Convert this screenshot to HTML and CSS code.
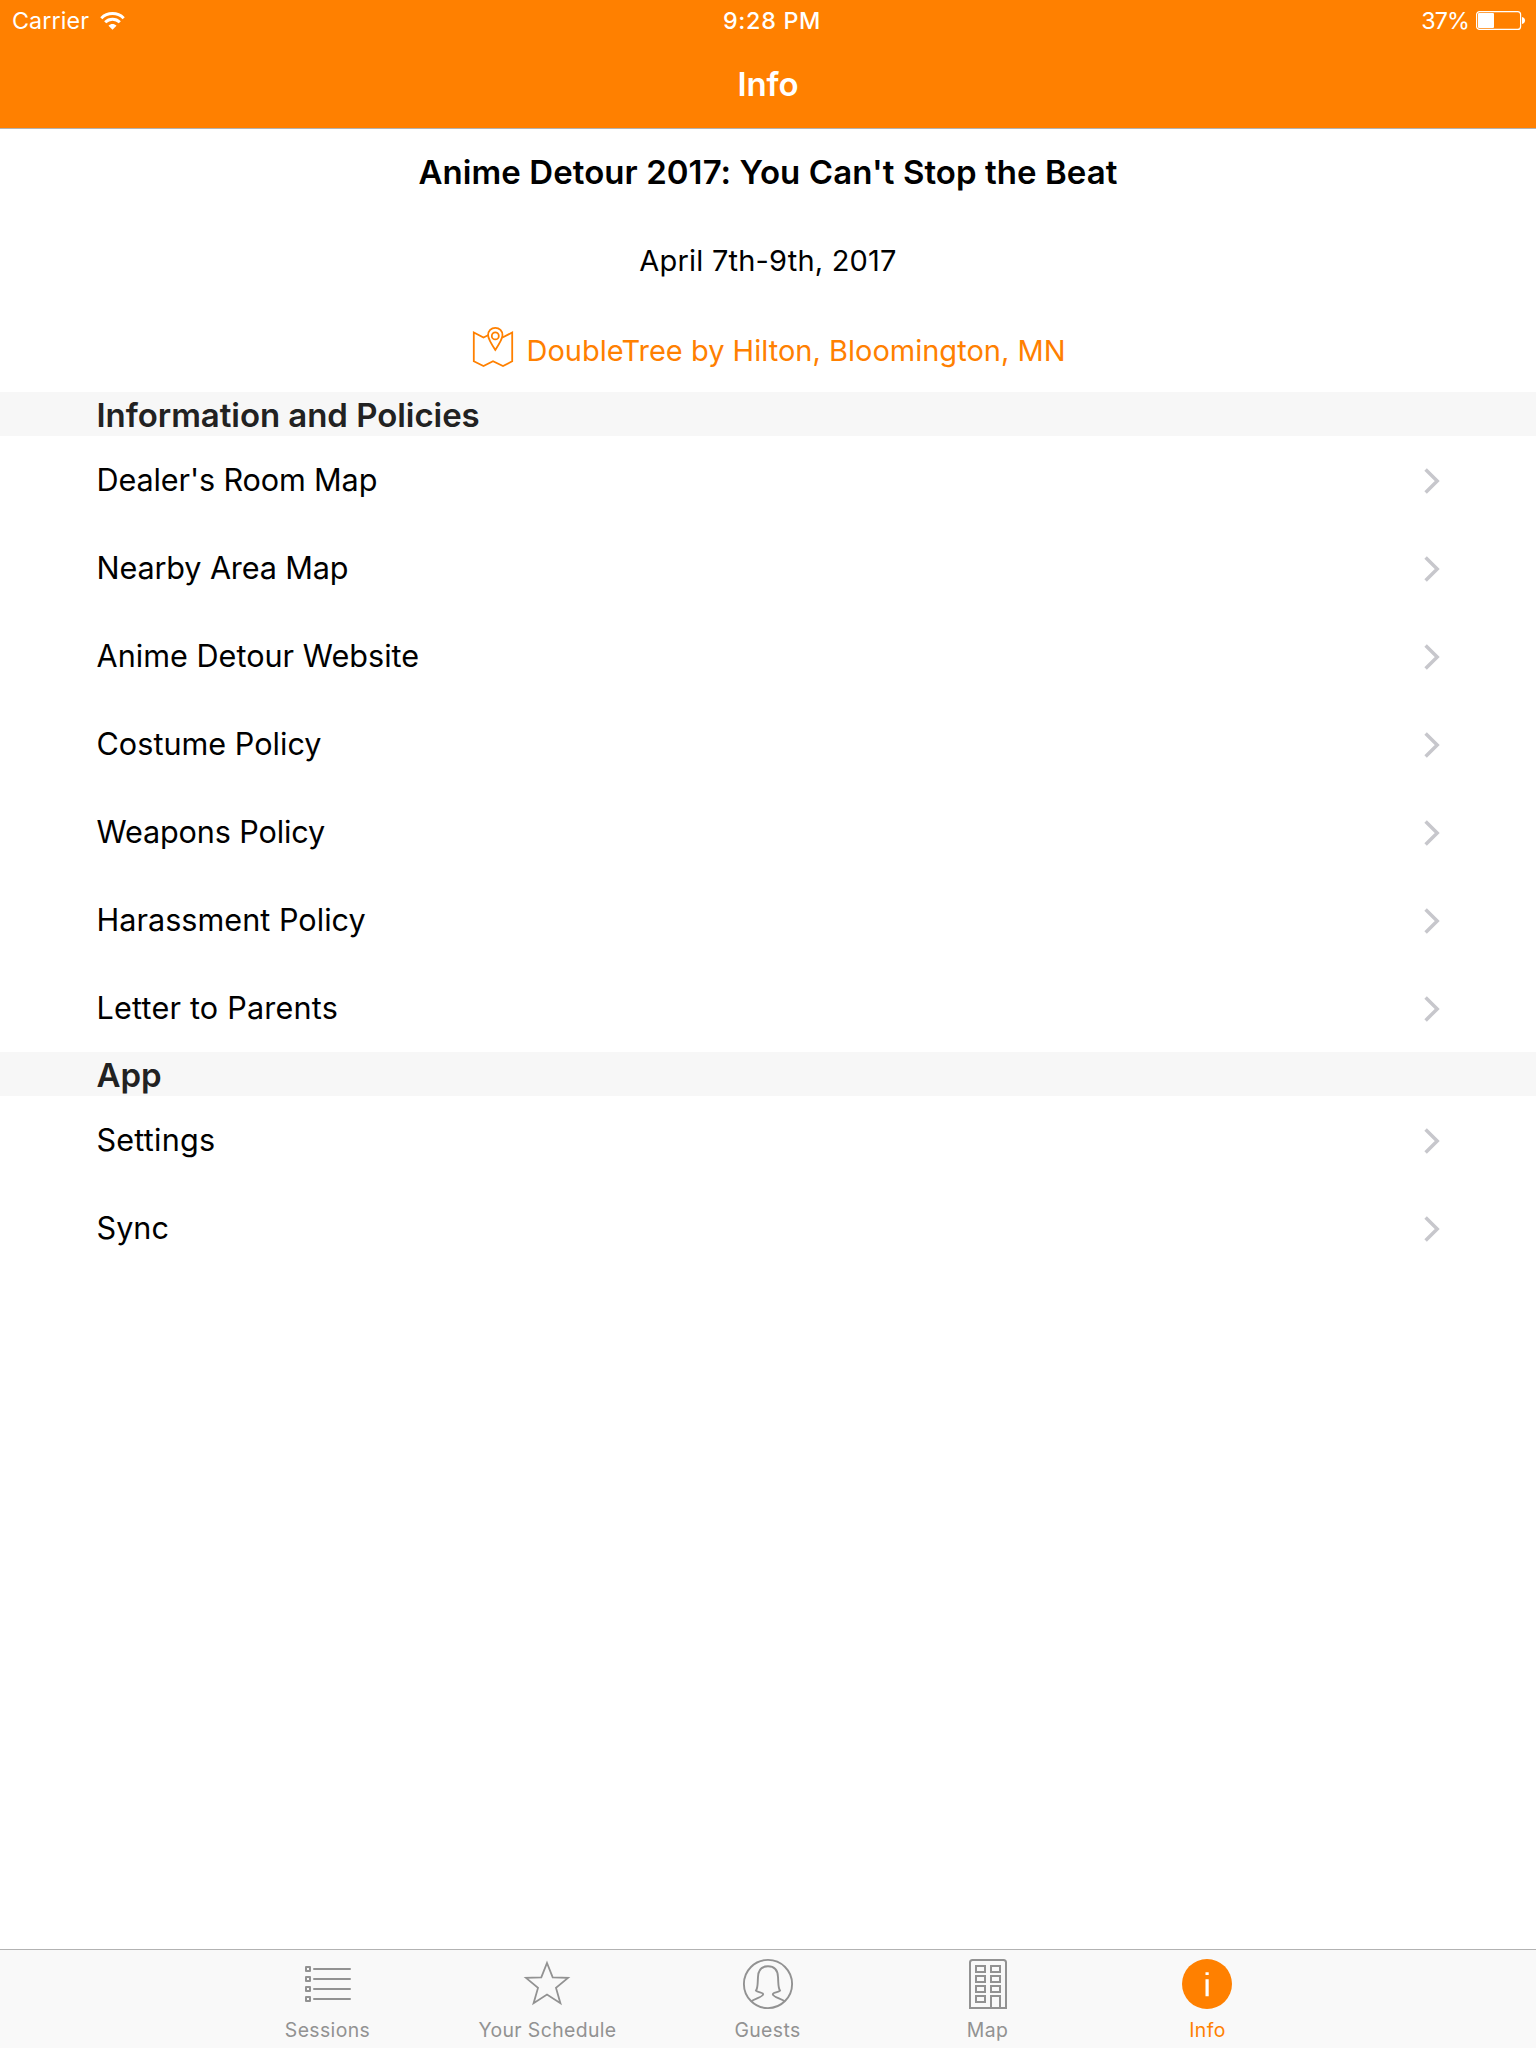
FILE: index.html
```html
<!DOCTYPE html>
<html lang="en">
<head>
<meta charset="utf-8">
<title>Info</title>
<link rel="stylesheet" href="styles.css">
</head>
<body>
<svg class="defs" aria-hidden="true">
  <symbol id="chevron" viewBox="0 0 16 26"><path d="M1.600 1.600 13.200 13 1.600 24.400" fill="none" stroke="#c7c7cc" stroke-width="3.500"/></symbol>
</svg>

<header class="navbar">
  <div class="status">
    <div class="status-left">
      <span class="carrier">Carrier</span>
      <svg class="wifi" width="25" height="18" viewBox="0 0 25 18">
        <g fill="none" stroke="#fff" stroke-width="3">
          <path d="M1.300 6.200C7.500 0 17.500 0 23.700 6.200"/>
          <path d="M5.200 10.300C9.300 6.300 15.700 6.300 19.800 10.300"/>
        </g>
        <path d="M8.500 13.700C10.700 11.400 14.300 11.400 16.500 13.700L12.500 17.800Z" fill="#fff"/>
      </svg>
    </div>
    <div class="time">9:28 PM</div>
    <div class="status-right">
      <span class="percent">37%</span>
      <svg class="battery" width="49" height="19" viewBox="0 0 49 19">
        <rect x=".6" y=".6" width="44" height="17.800" rx="3" fill="none" stroke="#fff" stroke-width="1.200"/>
        <rect x="2" y="2" width="16" height="15" rx="1" fill="#fff"/>
        <path d="M46 6c4 .5 4 6.500 0 7z" fill="#fff"/>
      </svg>
    </div>
  </div>
  <h1 class="nav-title">Info</h1>
</header>

<main class="content">
  <section class="event">
    <h2 class="event-title">Anime Detour 2017: You Can't Stop the Beat</h2>
    <p class="event-date">April 7th-9th, 2017</p>
    <a class="event-place">
      <svg class="place-icon" width="40" height="40" viewBox="0 0 40 40" fill="none" stroke="#ff8000" stroke-width="1.800">
        <path d="M15.500 8 10.500 10.500.8 5.500V34.300L10.500 39 20 34.200 30 39 39.200 34.300V5.500L29.500 10.500"/>
        <path d="M22.300.8a7.200 7.200 0 0 1 7.200 7.400c0 3.300-3 8.300-7.200 14.700-4.200-6.400-7.200-11.400-7.200-14.700A7.200 7.200 0 0 1 22.300.8z"/>
        <circle cx="22.300" cy="8.900" r="3.500"/>
      </svg>
      <span>DoubleTree by Hilton, Bloomington, MN</span>
    </a>
  </section>

  <h3 class="section-head">Information and Policies</h3>
  <ul class="rows">
    <li class="row tight"><span>Dealer's Room Map</span><svg class="chevron"><use href="#chevron"/></svg></li>
    <li class="row tight"><span>Nearby Area Map</span><svg class="chevron"><use href="#chevron"/></svg></li>
    <li class="row"><span>Anime Detour Website</span><svg class="chevron"><use href="#chevron"/></svg></li>
    <li class="row"><span>Costume Policy</span><svg class="chevron"><use href="#chevron"/></svg></li>
    <li class="row tight"><span>Weapons Policy</span><svg class="chevron"><use href="#chevron"/></svg></li>
    <li class="row"><span>Harassment Policy</span><svg class="chevron"><use href="#chevron"/></svg></li>
    <li class="row loose"><span>Letter to Parents</span><svg class="chevron"><use href="#chevron"/></svg></li>
  </ul>

  <h3 class="section-head">App</h3>
  <ul class="rows">
    <li class="row loose"><span>Settings</span><svg class="chevron"><use href="#chevron"/></svg></li>
    <li class="row"><span>Sync</span><svg class="chevron"><use href="#chevron"/></svg></li>
  </ul>
</main>

<nav class="tabbar">
  <a class="tab">
    <svg class="tab-icon" viewBox="0 0 50 50" fill="none" stroke="currentColor" stroke-width="2">
      <g stroke-linejoin="round">
        <rect x="3" y="8" width="4" height="4"/><rect x="3" y="18" width="4" height="4"/>
        <rect x="3" y="28" width="4" height="4"/><rect x="3" y="38" width="4" height="4"/>
      </g>
      <path d="M11 10H47M11 20H47M11 30H47M11 40H47" stroke-linecap="round"/>
    </svg>
    <span>Sessions</span>
  </a>
  <a class="tab">
    <svg class="tab-icon" viewBox="0 0 50 50" fill="none" stroke="currentColor" stroke-width="1.800">
      <path d="M24 4 29.700 18.400 45 18.900 33 28.900 37.400 44.200 24 35.500 10.600 44.200 15 28.900 3 18.900 18.300 18.400Z"/>
    </svg>
    <span>Your Schedule</span>
  </a>
  <a class="tab">
    <svg class="tab-icon" viewBox="0 0 50 50" fill="none" stroke="currentColor" stroke-width="1.900">
      <circle cx="25" cy="25" r="24.100"/>
      <path d="M8.300 42.300C12 39.500 20 38 20.200 35.200 20.200 33.500 14.500 33.500 13 31.600 15 28.500 14.500 25 15 18 15.300 10.500 18.500 7.300 25 7.300S34.700 10.500 35 18C35.500 25 35 28.500 37 31.600 35.500 33.500 29.800 33.500 29.800 35.200 30 38 38 39.500 41.700 42.300"/>
    </svg>
    <span>Guests</span>
  </a>
  <a class="tab">
    <svg class="tab-icon" viewBox="0 0 50 50" fill="none" stroke="currentColor" stroke-width="2">
      <path d="M7 49V3.500Q7 1 9.500 1H40.500Q43 1 43 3.500V49Z"/>
      <path d="M13 7h9v6h-9zM28 7h9v6h-9zM13 17h9v6h-9zM28 17h9v6h-9zM13 27h9v6h-9zM28 27h9v6h-9zM13 37h9v6h-9zM28 49V37h9v12"/>
    </svg>
    <span>Map</span>
  </a>
  <a class="tab active">
    <svg class="tab-icon" viewBox="0 0 50 50">
      <circle cx="24" cy="25" r="25" fill="currentColor"/>
      <path d="M22.500 13.200h3.200v2.800h-3.200zM22.500 20.200h3.200v17h-3.200z" fill="#fff"/>
    </svg>
    <span>Info</span>
  </a>
</nav>
</body>
</html>
```
FILE: styles.css
```css
* {
  box-sizing: border-box;
  margin: 0;
  padding: 0;
}

body {
  display: flex;
  flex-direction: column;
  height: 2048px;
  background: #fff;
  color: #000;
  font-family: Inter, "Liberation Sans", sans-serif;
}

svg {
  display: block;
  flex: none;
  overflow: visible;
}

.defs {
  display: none;
}

.navbar {
  height: 129px;
  background: #ff8000;
  border-bottom: 1px solid #b2b2b2;
  color: #fff;
}

.status {
  display: grid;
  grid-template-columns: 1fr auto 1fr;
  align-items: center;
  height: 41px;
  padding: 0 11px 0 12px;
  font-size: 23.3px;
  line-height: 41px;
}

.status-left,
.status-right {
  display: flex;
  align-items: center;
}

.status-left {
  gap: 11px;
}

.status-right {
  justify-content: flex-end;
  gap: 7px;
}

.carrier {
  letter-spacing: 0.1px;
}

.time {
  padding-left: 7px;
  font-weight: 500;
  letter-spacing: 0.7px;
}

.percent {
  letter-spacing: -0.9px;
}

.nav-title {
  font-size: 33px;
  font-weight: 600;
  line-height: 87px;
  letter-spacing: -0.1px;
  text-align: center;
}

.content {
  flex: 1;
}

.event {
  display: flex;
  flex-direction: column;
  align-items: center;
  height: 263px;
}

.event-title {
  font-size: 33px;
  font-weight: 600;
  line-height: 86px;
  letter-spacing: 0.07px;
}

.event-date {
  font-size: 29px;
  line-height: 91px;
  letter-spacing: 0.2px;
}

.event-place {
  display: flex;
  gap: 13px;
  padding-left: 3px;
  color: #ff8000;
  font-size: 29px;
  line-height: 89px;
  letter-spacing: 0.01px;
}

.place-icon {
  margin-top: 21px;
}

.section-head {
  height: 44px;
  padding-left: 96.5px;
  background: #f7f7f7;
  color: #222;
  font-size: 33px;
  font-weight: 600;
  line-height: 46px;
  letter-spacing: -0.05px;
}

.rows {
  list-style: none;
}

.row {
  display: flex;
  align-items: center;
  justify-content: space-between;
  height: 88px;
  padding: 0 96px 0 96.5px;
  font-size: 30.6px;
  line-height: 88px;
  letter-spacing: 0.02px;
}

.row.tight {
  letter-spacing: -0.13px;
}

.row.loose {
  letter-spacing: 0.2px;
}

.chevron {
  width: 16px;
  height: 26px;
  margin-top: 2px;
}

.tabbar {
  display: flex;
  justify-content: center;
  height: 99px;
  background: #f9f9f9;
  border-top: 1px solid #b2b2b2;
}

.tab {
  display: flex;
  flex-direction: column;
  align-items: center;
  width: 220px;
  padding-top: 9px;
  color: #929292;
  font-size: 19.4px;
  line-height: 24px;
  letter-spacing: 0.38px;
}

.tab.active {
  color: #ff8000;
}

.tab-icon {
  width: 50px;
  height: 50px;
  margin-bottom: 9px;
}

.tab span {
  margin-right: 1px;
}
```
